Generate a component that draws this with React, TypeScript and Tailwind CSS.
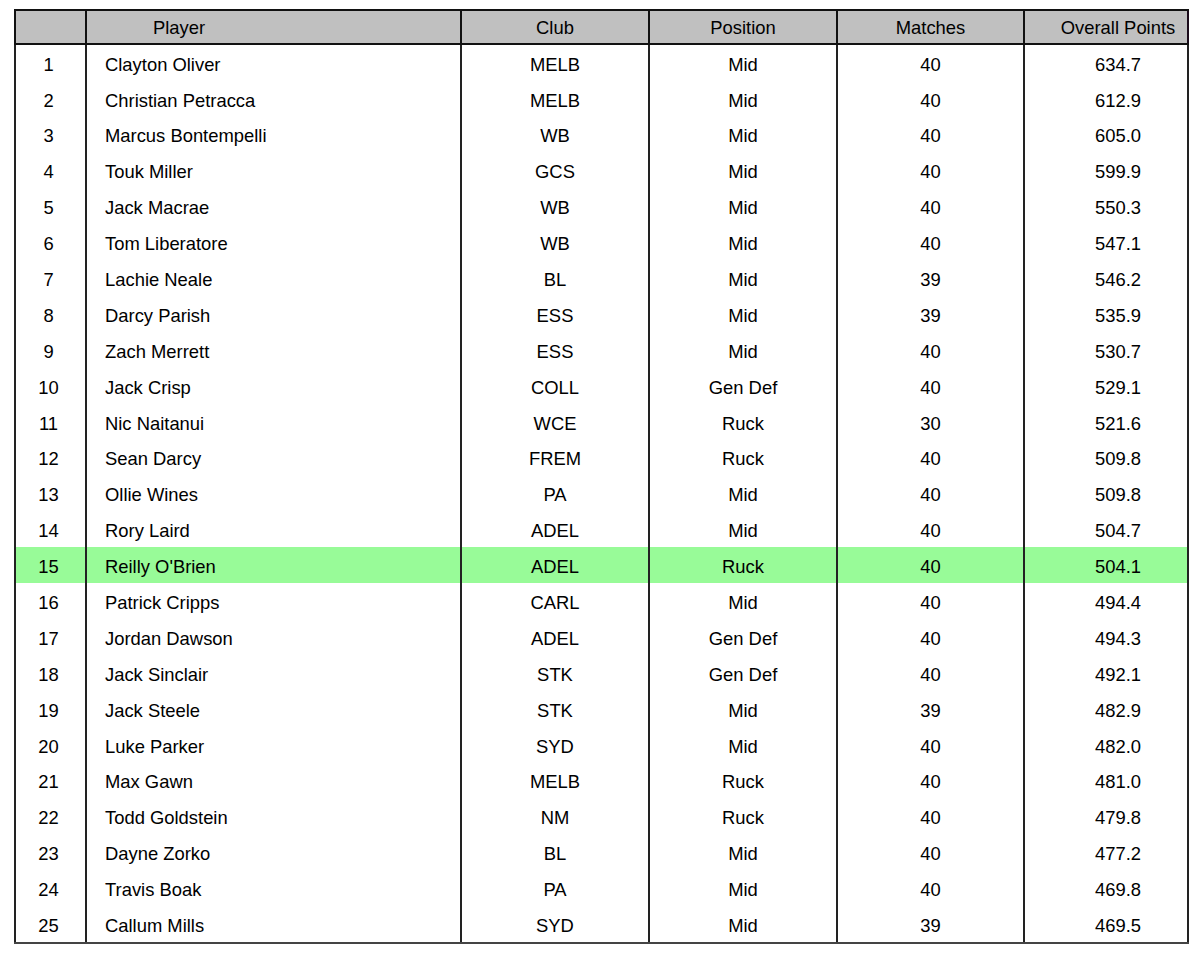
const players = [
  { rank: 1, name: "Clayton Oliver", club: "MELB", position: "Mid", matches: 40, points: "634.7" },
  { rank: 2, name: "Christian Petracca", club: "MELB", position: "Mid", matches: 40, points: "612.9" },
  { rank: 3, name: "Marcus Bontempelli", club: "WB", position: "Mid", matches: 40, points: "605.0" },
  { rank: 4, name: "Touk Miller", club: "GCS", position: "Mid", matches: 40, points: "599.9" },
  { rank: 5, name: "Jack Macrae", club: "WB", position: "Mid", matches: 40, points: "550.3" },
  { rank: 6, name: "Tom Liberatore", club: "WB", position: "Mid", matches: 40, points: "547.1" },
  { rank: 7, name: "Lachie Neale", club: "BL", position: "Mid", matches: 39, points: "546.2" },
  { rank: 8, name: "Darcy Parish", club: "ESS", position: "Mid", matches: 39, points: "535.9" },
  { rank: 9, name: "Zach Merrett", club: "ESS", position: "Mid", matches: 40, points: "530.7" },
  { rank: 10, name: "Jack Crisp", club: "COLL", position: "Gen Def", matches: 40, points: "529.1" },
  { rank: 11, name: "Nic Naitanui", club: "WCE", position: "Ruck", matches: 30, points: "521.6" },
  { rank: 12, name: "Sean Darcy", club: "FREM", position: "Ruck", matches: 40, points: "509.8" },
  { rank: 13, name: "Ollie Wines", club: "PA", position: "Mid", matches: 40, points: "509.8" },
  { rank: 14, name: "Rory Laird", club: "ADEL", position: "Mid", matches: 40, points: "504.7" },
  { rank: 15, name: "Reilly O'Brien", club: "ADEL", position: "Ruck", matches: 40, points: "504.1" },
  { rank: 16, name: "Patrick Cripps", club: "CARL", position: "Mid", matches: 40, points: "494.4" },
  { rank: 17, name: "Jordan Dawson", club: "ADEL", position: "Gen Def", matches: 40, points: "494.3" },
  { rank: 18, name: "Jack Sinclair", club: "STK", position: "Gen Def", matches: 40, points: "492.1" },
  { rank: 19, name: "Jack Steele", club: "STK", position: "Mid", matches: 39, points: "482.9" },
  { rank: 20, name: "Luke Parker", club: "SYD", position: "Mid", matches: 40, points: "482.0" },
  { rank: 21, name: "Max Gawn", club: "MELB", position: "Ruck", matches: 40, points: "481.0" },
  { rank: 22, name: "Todd Goldstein", club: "NM", position: "Ruck", matches: 40, points: "479.8" },
  { rank: 23, name: "Dayne Zorko", club: "BL", position: "Mid", matches: 40, points: "477.2" },
  { rank: 24, name: "Travis Boak", club: "PA", position: "Mid", matches: 40, points: "469.8" },
  { rank: 25, name: "Callum Mills", club: "SYD", position: "Mid", matches: 39, points: "469.5" },
];

const cols = "grid grid-cols-[71px_375px_188px_188px_187px_166px]";
const head = "border-l-2 border-[#111] flex items-center pt-[2px]";
const cell = "border-l-2 border-[#222] flex items-center pt-[3px]";

function App() {
  return (
    <div className="w-[1200px] h-[960px] bg-white pt-[9px] pl-[14px] font-['Liberation_Sans',Arial,sans-serif] text-[18.4px] text-black">
      <div className="w-[1175px] border-b-2 border-[#444]">
        {/* header */}
        <div className={`${cols} h-[36px] bg-[#c0c0c0] border-t-2 border-b-2 border-[#111]`}>
          <div className={head} />
          <div className={`${head} pl-[66px]`}>Player</div>
          <div className={`${head} justify-center`}>Club</div>
          <div className={`${head} justify-center`}>Position</div>
          <div className={`${head} justify-center`}>Matches</div>
          <div className={`${head} justify-center pl-[24px] border-r-2 border-r-[#1a0a1a]`}>Overall Points</div>
        </div>

        {players.map((p) => (
          <div
            key={p.rank}
            className={`${cols} h-[35.9px] ${p.rank === 15 ? "bg-[#98fb98]" : ""}`}
          >
            <div className={`${cell} justify-center pr-[4px]`}>{p.rank}</div>
            <div className={`${cell} pl-[18px]`}>{p.name}</div>
            <div className={`${cell} justify-center`}>{p.club}</div>
            <div className={`${cell} justify-center`}>{p.position}</div>
            <div className={`${cell} justify-center`}>{p.matches}</div>
            <div className={`${cell} justify-center pl-[24px] border-r-2`}>{p.points}</div>
          </div>
        ))}
      </div>
    </div>
  );
}

export default App;
